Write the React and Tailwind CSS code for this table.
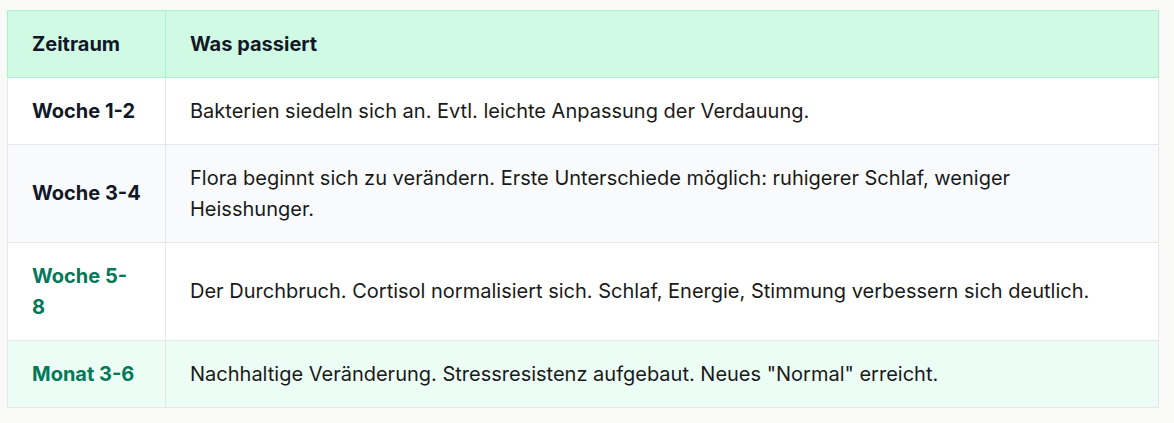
export default function App() {
  const rows = [
    { t: "Woche 1-2", d: "Bakterien siedeln sich an. Evtl. leichte Anpassung der Verdauung.", bg: "bg-white", green: false, nowrap: true },
    { t: "Woche 3-4", d: "Flora beginnt sich zu verändern. Erste Unterschiede möglich: ruhigerer Schlaf, weniger Heisshunger.", bg: "bg-[#f9fafb]", green: false, nowrap: true },
    { t: "Woche 5-8", d: "Der Durchbruch. Cortisol normalisiert sich. Schlaf, Energie, Stimmung verbessern sich deutlich.", bg: "bg-white", green: true, nowrap: false },
    { t: "Monat 3-6", d: "Nachhaltige Veränderung. Stressresistenz aufgebaut. Neues \"Normal\" erreicht.", bg: "bg-[#ecfdf5]", green: true, nowrap: true },
  ];
  return (
    <div className="min-h-[423px] w-[1174px] bg-[#f9f9f8] pl-[7px] pt-[10px] font-['Inter',sans-serif]">
      <table className="w-[1152px] table-fixed border-collapse text-[20px] leading-[31px]">
        <thead>
          <tr className="bg-[#d1fae5]">
            <th className="w-[158px] border border-[#a7f3d0] py-[17.5px] pl-6 pr-[29px] text-left font-bold text-[#111827]">Zeitraum</th>
            <th className="border border-[#a7f3d0] px-6 py-[17.5px] text-left font-bold text-[#111827]">Was passiert</th>
          </tr>
        </thead>
        <tbody>
          {rows.map((r) => (
            <tr key={r.t} className={r.bg}>
              <td className={`border border-[#e5e7eb] py-[17.5px] pl-6 pr-[29px] font-bold ${r.nowrap ? "whitespace-nowrap" : ""} ${r.green ? "text-[#047857]" : "text-[#111827]"}`}>{r.t}</td>
              <td className="border border-[#e5e7eb] px-6 py-[17.5px] text-[#1a1a1a]">{r.d}</td>
            </tr>
          ))}
        </tbody>
      </table>
    </div>
  );
}
